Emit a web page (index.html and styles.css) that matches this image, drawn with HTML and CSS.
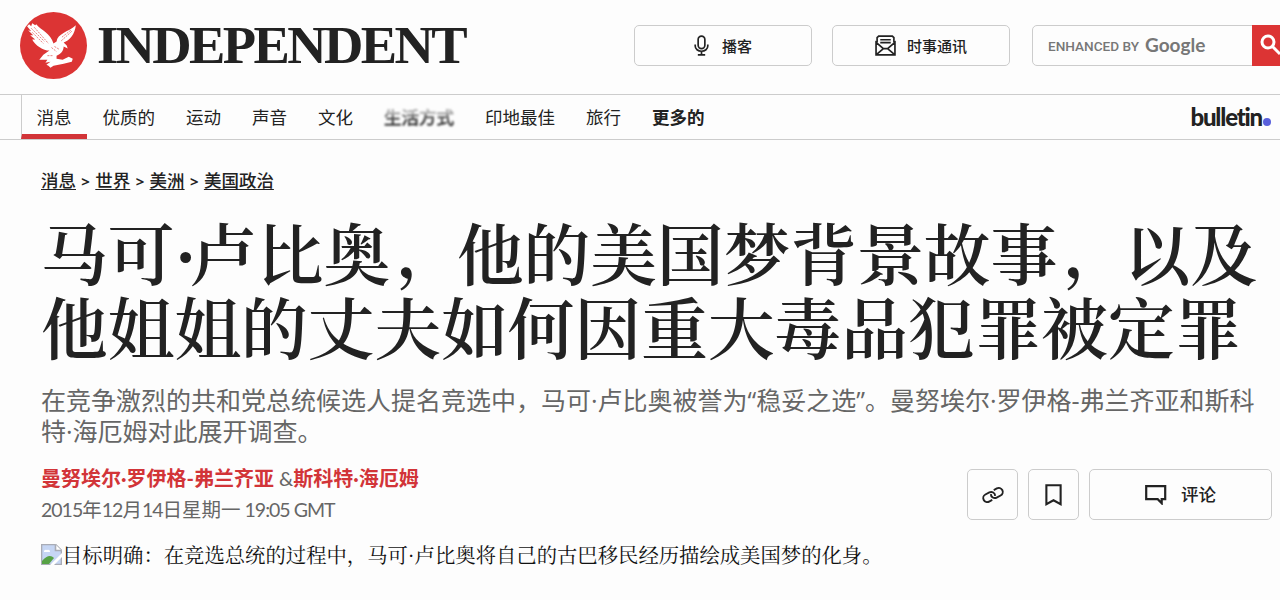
FILE: index.html
```html
<!DOCTYPE html>
<html lang="zh-CN">

<head>
    <meta charset="utf-8">
    <title>Independent</title>
    <link rel="stylesheet" href="styles.css">
</head>

<body>
    <header class="header">
        <a class="logo">
            <svg class="eagle" viewBox="0 0 66 66">
                <circle cx="33" cy="33" r="33" fill="#dc3434" />
                <path d="M7 14 L9 12 L11 14 L12 11 L15 13 L16 12 C21 18 30 21 33 31 L36 29 C37 21 47 20 55 13 C54 22 49 28 43 30 L46 33 L47 36 L43 34 C43 38 40 42 36 43 L36 46 L42 47 L48 44 L52 46 L51 49 L43 51 L33 53 L30 55 L28 53 L26 52 L30 49 L25 50 L27 47 L19 47 L23 42 L29 38 C23 38 15 33 12 27 L15 27 L10 23 L13 23 L8 18 L11 19 Z" fill="#fff" />
                <path d="M11 16 L24 29 M14 15 L28 31 M12 20 L23 31 M51 19 L40 29 M50 18 L41 25 M31 35 L36 39 M34 34 L39 37 M27 43 L32 43" stroke="#dc3434" stroke-width=".6" stroke-dasharray="2 1" />
            </svg>
            <svg class="wordmark" viewBox="0 0 370 50">
                <text x="0" y="41.5" textLength="368" lengthAdjust="spacingAndGlyphs">INDEPENDENT</text>
            </svg>
        </a>
        <div class="tools">
            <a class="btn">
                <svg class="icon-mic" viewBox="0 0 14 20">
                    <rect x="3.8" y="1" width="6.4" height="12" rx="3.2" />
                    <path d="M1 9v1.5a6 5 0 0 0 12 0V9M7 15.5V19M3.5 19h7" />
                </svg>
                <span>播客</span>
            </a>
            <a class="btn">
                <svg class="icon-mail" viewBox="0 0 20 20">
                    <path d="M2 7V2.5L3.5 1h13L18 2.5V7M1 7v12h18V7l-7 6H8zM1 19l7-6M19 19l-7-6M5 4.5h10M5 7.3h10" />
                </svg>
                <span>时事通讯</span>
            </a>
            <div class="search">
                <span class="enhanced">ENHANCED BY</span>
                <span class="google">Google</span>
                <span class="search-btn">
                    <svg viewBox="0 0 24 24">
                        <circle cx="8" cy="8" r="6" />
                        <path d="M12.5 12.5L20 20" />
                    </svg>
                </span>
            </div>
        </div>
    </header>

    <nav class="nav">
        <ul>
            <li class="active">消息</li>
            <li>优质的</li>
            <li>运动</li>
            <li>声音</li>
            <li>文化</li>
            <li><span class="smudge">生活方式</span></li>
            <li>印地最佳</li>
            <li>旅行</li>
            <li class="more">更多的</li>
        </ul>
        <div class="bulletin">bulletin<i></i></div>
    </nav>

    <main>
        <div class="crumbs"><a>消息</a><b>&gt;</b><a>世界</a><b>&gt;</b><a>美洲</a><b>&gt;</b><a>美国政治</a></div>
        <h1>马可<span class="dot">·</span>卢比奥<span class="comma">，</span>他的美国梦背景故事<span class="comma">，</span>以及<br>他姐姐的丈夫如何因重大毒品犯罪被定罪</h1>
        <h2>在竞争激烈的共和党总统候选人提名竞选中，马可·卢比奥被誉为“稳妥之选”。曼努埃尔·罗伊格-弗兰齐亚和斯科<br>特·海厄姆对此展开调查。</h2>
        <div class="meta">
            <div>
                <p class="authors"><a>曼努埃尔·罗伊格-弗兰齐亚</a> &amp;<a>斯科特·海厄姆</a></p>
                <p class="date"><span>2015</span>年<span>12</span>月<span>14</span>日星期一<span> 19:05 GMT</span></p>
            </div>
            <div class="actions">
                <a class="action">
                    <svg class="icon-link" viewBox="0 0 22 18">
                        <g transform="rotate(-28 11 9)">
                            <path d="M8 13H4.500a4 4 0 0 1 0-8h4.500a4 4 0 0 1 3.500 5.800" />
                            <path d="M14 5h3.500a4 4 0 0 1 0 8h-4.500a4 4 0 0 1-3.500-5.800" />
                        </g>
                    </svg>
                </a>
                <a class="action">
                    <svg class="icon-mark" viewBox="0 0 16 21">
                        <path d="M1.2 1.2h13.6v18L8 15.5l-6.8 3.7z" />
                    </svg>
                </a>
                <a class="action comment">
                    <svg class="icon-comment" viewBox="0 0 22 20">
                        <path d="M1.2 1.2h19v13h-3.5v4l-4-4H1.2z" />
                    </svg>
                    <span>评论</span>
                </a>
            </div>
        </div>
        <div class="photo">
            <svg class="broken" viewBox="0 0 21 21">
                <path d="M.5.5h14l6 6v14H.5z" fill="#c6d6f4" stroke="#a9acb5" />
                <path d="M14.5.5v6h6" fill="#fff" stroke="#a9acb5" />
                <path d="M3 8a2 2 0 0 1 3-2 2 2 0 0 1 3 2z" fill="#fff" />
                <path d="M1 20v-3c5-6 9-6 12-3l-5 6z" fill="#57a245" />
                <path d="M9 21L21 9v4l-8 8z" fill="#fff" />
            </svg>
            <span>目标明确：在竞选总统的过程中，马可·卢比奥将自己的古巴移民经历描绘成美国梦的化身。</span>
        </div>
    </main>
</body>

</html>
```
FILE: styles.css
```css
* {
    box-sizing: border-box;
}

body {
    margin: 0;
    height: 600px;
    overflow: hidden;
    background: #fdfdfd;
    color: #222;
    font-family: "Noto Sans CJK SC", sans-serif;
}

svg {
    fill: none;
    stroke: #222;
    stroke-width: 1.6;
    flex: none;
}

h1,
h2,
p,
ul {
    margin: 0;
    padding: 0;
}

.header {
    height: 94px;
    display: flex;
    justify-content: space-between;
    padding: 12px 0 0 20px;
}

.logo {
    display: flex;
    gap: 10px;
}

.eagle {
    width: 67px;
    height: 67px;
    stroke: none;
}

.wordmark {
    width: 370px;
    height: 50px;
    margin-top: 9px;
    overflow: visible;
}

.wordmark text {
    font: bold 52px "Liberation Serif", serif;
    letter-spacing: -2.5px;
    fill: #222;
    stroke: none;
}

.tools {
    display: flex;
    gap: 20px;
    padding-top: 13px;
    margin-right: -8px;
}

.btn {
    width: 178px;
    height: 41px;
    border: 1px solid #ccc;
    border-radius: 5px;
    display: flex;
    align-items: center;
    justify-content: center;
    gap: 13px;
    font-size: 15px;
    font-weight: 500;
}

.icon-mic {
    width: 15px;
    height: 21px;
}

.icon-mail {
    width: 21px;
    height: 21px;
    margin-right: -2px;
}

.search {
    width: 256px;
    height: 41px;
    margin-left: 2px;
    border: 1px solid #ccc;
    border-radius: 5px;
    display: flex;
    align-items: center;
    padding-left: 15px;
    color: #777;
}

.enhanced {
    width: 97px;
    font: 500 13.6px Roboto, sans-serif;
}

.google {
    font: bold 19px/24px Lato, sans-serif;
    padding-bottom: 2px;
}

.search-btn {
    margin-left: auto;
    width: 35px;
    height: 41px;
    background: #dc3434;
    padding: 9px 0 0 8px;
}

.search-btn svg {
    width: 24px;
    height: 24px;
    stroke: #fff;
    stroke-width: 3;
}

.nav {
    height: 46px;
    border-top: 1px solid #ccc;
    border-bottom: 1px solid #ccc;
    padding: 0 9px 0 21px;
    display: flex;
    justify-content: space-between;
}

.nav ul {
    display: flex;
    list-style: none;
    font-size: 17.5px;
    line-height: 43px;
}

.nav li {
    padding: 0 15.5px;
}

.nav .active {
    padding-left: 14.5px;
    border-left: 1px solid #ccc;
    border-bottom: 5px solid #d23438;
}

/* half-erased menu item */
.smudge {
    color: transparent;
    background: linear-gradient(#bbb 35%, #555 50%, #222 70%) text;
    -webkit-text-stroke: .6px rgba(120, 120, 120, .35);
    filter: blur(.8px);
}

.more {
    font-weight: bold;
}

.bulletin {
    display: flex;
    align-items: baseline;
    font: 900 24px/44px Lato, sans-serif;
    letter-spacing: -1.2px;
}

.bulletin i {
    width: 8px;
    height: 8px;
    margin-left: 1px;
    border-radius: 50%;
    background: #5960dc;
}

main {
    padding: 0 8px 0 41px;
}

.crumbs {
    padding-top: 26px;
    height: 81px;
    font-size: 17.5px;
    line-height: 28px;
    font-weight: 500;
}

.crumbs a {
    text-decoration: underline;
    text-decoration-thickness: 1px;
    text-underline-offset: 2px;
}

.crumbs b {
    display: inline-block;
    width: 19.3px;
    text-align: center;
    font: bold 15px "Open Sans", sans-serif;
}

h1 {
    font: 600 66.7px/74px "Liberation Serif", "Noto Serif CJK SC", "Noto Sans CJK SC", serif;
    white-space: nowrap;
}

.dot {
    letter-spacing: -6.5px;
}

.comma {
    position: relative;
    left: 6px;
    top: -4px;
}

h2 {
    margin-top: 16px;
    color: #666;
    font: 25px/31px "Open Sans", "Noto Sans CJK SC", sans-serif;
    white-space: nowrap;
}

.meta {
    display: flex;
    justify-content: space-between;
    margin-top: 16px;
    height: 78px;
    color: #666;
    font: 19.5px/31px Lato, "Noto Sans CJK SC", sans-serif;
}

.authors {
    font-size: 20px;
}

.authors a {
    color: #d23438;
    font-weight: bold;
}

.date span {
    letter-spacing: -1px;
}

.actions {
    display: flex;
    gap: 10px;
    padding-top: 6px;
}

.action {
    width: 51px;
    height: 51px;
    border: 1px solid #ccc;
    border-radius: 5px;
    display: flex;
    align-items: center;
    justify-content: center;
    color: #222;
}

.comment {
    width: 183px;
    gap: 14px;
    font-size: 17.5px;
    font-weight: 500;
}

.icon-link {
    width: 22px;
    height: 18px;
    stroke-width: 1.9;
    overflow: visible;
}

.icon-mark {
    width: 17px;
    height: 22px;
    stroke-width: 2;
}

.icon-comment {
    width: 22px;
    height: 20px;
    stroke-width: 2.2;
}

.photo {
    display: flex;
    align-items: center;
    height: 30px;
    color: #111;
    font: 20.35px/30px "Liberation Serif", "Noto Serif CJK SC", "Noto Sans CJK SC", serif;
    white-space: nowrap;
}

.broken {
    width: 21px;
    height: 21px;
    margin-bottom: 3px;
    stroke: none;
}
```
